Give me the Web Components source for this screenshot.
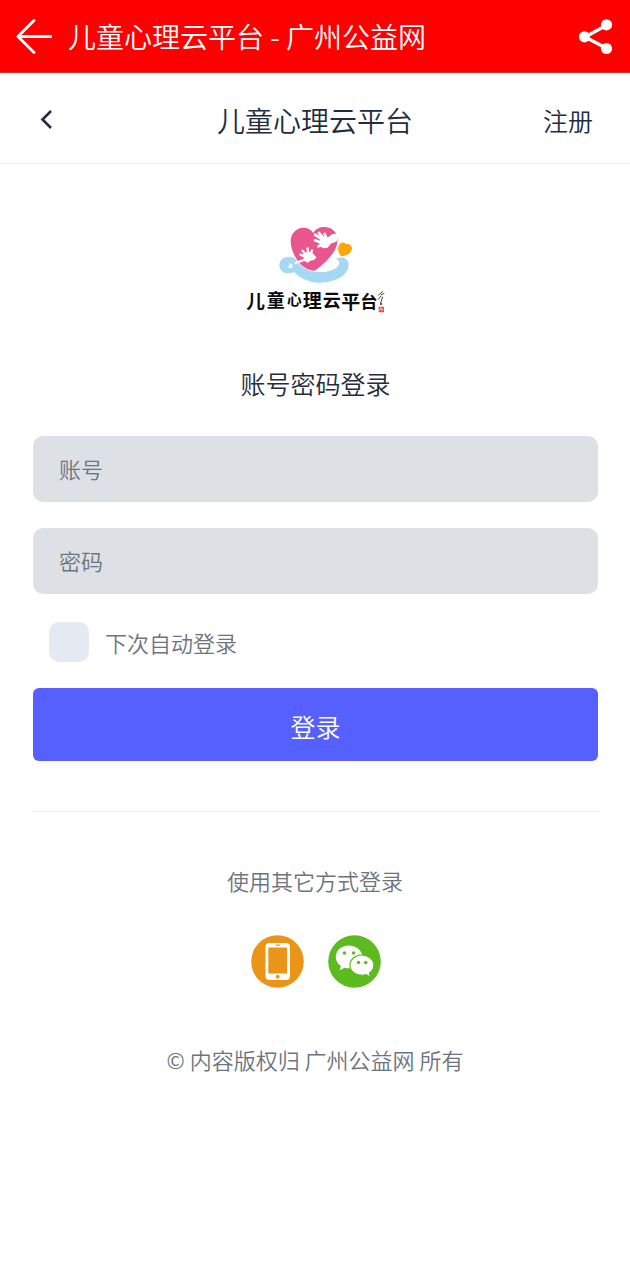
<!DOCTYPE html>
<html lang="zh-CN">
<head>
  <meta charset="UTF-8">
  <meta name="viewport" content="width=device-width, initial-scale=1">
  <title>儿童心理云平台 - 广州公益网</title>
  <style>
    body {
      background-color: #fff;
      color: #1f2d3d;
      font-family: "Noto Sans CJK SC", sans-serif;
      font-weight: 350;
      margin: 0;
    }
  </style>
</head>
<body>
  <app-bar>儿童心理云平台 - 广州公益网</app-bar>
  <page-nav>
    儿童心理云平台
    <a slot="action" href="#register">注册</a>
  </page-nav>
  <main>
    <site-logo></site-logo>
    <login-form></login-form>
    <social-login>使用其它方式登录</social-login>
  </main>
  <page-footer>© 内容版权归 广州公益网 所有</page-footer>

  <script>
    class AppBar extends HTMLElement {
      constructor () {
        super()
        this.shadow = this.attachShadow({ mode: 'open' })
      }

      connectedCallback () {
        this.render()
      }

      render () {
        this.shadow.innerHTML =
          `
          <style>
            :host {
              align-items: center;
              background-color: #fe0000;
              border-bottom: 1px solid #d93030;
              box-sizing: border-box;
              color: #fff;
              display: flex;
              gap: 16px;
              height: 73px;
              padding: 0 16px;
            }

            h1 {
              flex: 1;
              font-size: 28px;
              font-weight: inherit;
              line-height: 40px;
              margin: 0;
            }

            button {
              background: none;
              border: none;
              color: inherit;
              cursor: pointer;
              display: flex;
              padding: 0;
            }
          </style>

          <button type="button" aria-label="返回">
            <svg width="36" height="36" viewBox="0 0 36 36" fill="none" stroke="currentColor" stroke-width="2.8" stroke-linecap="round" stroke-linejoin="round">
              <path d="M35 18.500H2M18 2.500L2 18.500l16 16"/>
            </svg>
          </button>
          <h1><slot></slot></h1>
          <button type="button" aria-label="分享">
            <svg width="36" height="36" viewBox="0 0 36 36" fill="currentColor">
              <path d="M29 7L7 19l22 11.500" fill="none" stroke="currentColor" stroke-width="3.4"/>
              <circle cx="6.500" cy="18.800" r="5.600"/>
              <circle cx="28.500" cy="6.800" r="5.600"/>
              <circle cx="28.500" cy="30.500" r="5.600"/>
            </svg>
          </button>
        `
      }
    }

    class PageNav extends HTMLElement {
      constructor () {
        super()
        this.shadow = this.attachShadow({ mode: 'open' })
      }

      connectedCallback () {
        this.render()
      }

      render () {
        this.shadow.innerHTML =
          `
          <style>
            :host {
              align-items: center;
              border-bottom: 1px solid #ededed;
              box-sizing: border-box;
              display: grid;
              grid-template-columns: 1fr auto 1fr;
              height: 91px;
              padding: 3px 37px 0;
            }

            button {
              background: none;
              border: none;
              color: inherit;
              cursor: pointer;
              display: flex;
              justify-self: start;
              padding: 0;
            }

            h2 {
              font-size: 28px;
              font-weight: inherit;
              line-height: 40px;
              margin: 0;
            }

            ::slotted(a) {
              color: inherit;
              font-size: 25px;
              justify-self: end;
              line-height: 40px;
              text-decoration: none;
            }
          </style>

          <button type="button" aria-label="后退">
            <svg width="20" height="24" viewBox="0 0 20 24" fill="none" stroke="currentColor" stroke-width="2.6">
              <path d="M14 3L5.500 11.500l8.500 8.500"/>
            </svg>
          </button>
          <h2><slot></slot></h2>
          <slot name="action"></slot>
        `
      }
    }

    class SiteLogo extends HTMLElement {
      constructor () {
        super()
        this.shadow = this.attachShadow({ mode: 'open' })
      }

      connectedCallback () {
        this.render()
      }

      render () {
        this.shadow.innerHTML =
          `
          <style>
            :host {
              display: flex;
              justify-content: center;
              padding-top: 61px;
            }

            text {
              font-weight: 700;
            }
          </style>

          <svg width="140" height="90" viewBox="30 30 420 270" role="img" aria-label="儿童心理云平台">
            <!-- wave -->
            <path fill="#a4d8f5" d="M162 125C144 125 132 138 133 152C135 173 158 180 177 171C195 190 225 203 254 203C300 202 338 182 341 152C342 130 322 121 303 132C318 137 316 152 300 161C270 177 235 173 210 155C195 142 182 125 162 125ZM162 147C168 144 175 149 173 155C170 160 161 160 158 156C162 156 165 151 162 147Z"/>
            <!-- heart -->
            <path fill="#e8558f" stroke="#fff" stroke-width="5" paint-order="stroke" d="M235 54C222 34 190 32 173 56C160 78 170 112 188 137C201 155 218 165 238 167C254 157 271 143 287 123C309 98 316 63 294 45C276 31 246 34 235 54Z"/>
            <!-- small heart -->
            <path fill="#fba60a" d="M311 93C314 81 327 79 334 87C345 85 354 94 350 105C346 116 333 122 319 124C311 116 307 104 311 93Z"/>
            <!-- hands -->
            <g fill="#fff" stroke="#fff" stroke-linecap="round" stroke-linejoin="round">
              <path stroke-width="4" d="M256 76L264 68L278 70L291 60L309 57L303 78L286 84L277 96L266 98L256 92Z"/>
              <path stroke-width="4" d="M207 118L220 112L231 115L242 127L236 133L225 135L218 141L209 136Z"/>
              <path fill="none" stroke-width="8" d="M261 73L240 59M266 70L252 54M274 70L269 57M259 83L240 76M260 90L250 94"/>
              <path fill="none" stroke-width="7" d="M212 118L203 107M219 114L218 100M227 117L231 106M209 124L196 119M211 133L182 144"/>
            </g>
            <g fill="#0b0b0b">
              <text x="34" y="280" font-size="56">儿</text>
              <text x="95" y="275" font-size="54">童</text>
              <text x="156" y="271" font-size="44">心</text>
              <text x="203" y="279" font-size="57">理</text>
              <text x="263" y="277" font-size="54">云</text>
              <text x="319" y="282" font-size="57">平</text>
              <text x="376" y="279" font-size="52">台</text>
            </g>
            <!-- signature and seal -->
            <path fill="none" stroke="#222" stroke-width="2.500" d="M443 229L430 241M438 239L448 235M439 242L429 254M443 245L437 264"/>
            <circle cx="438" cy="267" r="3" fill="#222"/>
            <rect x="431" y="275" width="16" height="17" rx="2" fill="#d94a55"/>
            <path fill="none" stroke="#fff" stroke-width="1.500" d="M434 279h4v4h-4v5M441 278v11M438 284h7"/>
          </svg>
        `
      }
    }

    class TextField extends HTMLElement {
      constructor () {
        super()
        this.shadow = this.attachShadow({ mode: 'open' })
      }

      connectedCallback () {
        this.render()
      }

      render () {
        const label = this.getAttribute('label')
        const type = this.getAttribute('type') || 'text'

        this.shadow.innerHTML =
          `
          <style>
            :host {
              display: block;
            }

            input {
              background-color: #dde1e6;
              border: none;
              border-radius: 10px;
              box-sizing: border-box;
              color: #1f2d3d;
              display: block;
              font-family: inherit;
              font-size: 22px;
              font-weight: inherit;
              height: 66px;
              padding: 0 26px 2px;
              width: 100%;
            }

            input::placeholder {
              color: #6c757d;
              opacity: 1;
            }
          </style>

          <input type="${type}" placeholder="${label}" aria-label="${label}">
        `
      }
    }

    class LoginForm extends HTMLElement {
      constructor () {
        super()
        this.shadow = this.attachShadow({ mode: 'open' })
      }

      connectedCallback () {
        this.render()
      }

      render () {
        this.shadow.innerHTML =
          `
          <style>
            :host {
              display: block;
              padding: 48px 32px 0 33px;
            }

            h3 {
              font-size: 25px;
              font-weight: inherit;
              line-height: 40px;
              margin: 0 0 33px;
              text-align: center;
            }

            form {
              border-bottom: 1px solid #ededed;
              display: flex;
              flex-direction: column;
              gap: 26px;
              padding-bottom: 50px;
            }

            .remember {
              align-items: center;
              color: #6c757d;
              display: flex;
              font-size: 22px;
              gap: 16px;
              line-height: 32px;
              margin-top: 2px;
              padding-left: 16px;
            }

            .remember input {
              appearance: none;
              background-color: #e4e9f2;
              border-radius: 10px;
              height: 40px;
              margin: 0;
              width: 40px;
            }

            .remember input:checked {
              background-color: #5660ff;
            }

            form > button {
              background-color: #5660ff;
              border: none;
              border-radius: 6px;
              color: #fff;
              cursor: pointer;
              font-family: inherit;
              font-size: 25px;
              font-weight: inherit;
              height: 73px;
              padding: 2px 0 0;
            }
          </style>

          <h3>账号密码登录</h3>
          <form>
            <text-field label="账号"></text-field>
            <text-field label="密码" type="password"></text-field>
            <div class="remember">
              <input type="checkbox" id="remember">
              <label for="remember">下次自动登录</label>
            </div>
            <button type="submit">登录</button>
          </form>
        `

        this.shadow.querySelector('form').addEventListener('submit', event => {
          event.preventDefault()
        })
      }
    }

    class SocialLogin extends HTMLElement {
      constructor () {
        super()
        this.shadow = this.attachShadow({ mode: 'open' })
      }

      connectedCallback () {
        this.render()
      }

      render () {
        this.shadow.innerHTML =
          `
          <style>
            :host {
              color: #6c757d;
              display: block;
              padding-top: 52px;
            }

            p {
              font-size: 22px;
              line-height: 32px;
              margin: 0;
              text-align: center;
            }

            .links {
              display: flex;
              gap: 24px;
              justify-content: center;
              margin-top: 39px;
              padding-left: 2px;
            }

            a {
              display: flex;
            }
          </style>

          <p><slot></slot></p>
          <div class="links">
            <a href="#phone" aria-label="手机登录">
              <svg width="53" height="53" viewBox="0 0 53 53">
                <circle cx="26.500" cy="26.500" r="26.300" fill="#eb9518"/>
                <rect x="14.500" y="8" width="24.500" height="37" rx="4" fill="#fff"/>
                <rect x="17.300" y="12.500" width="18.800" height="26" fill="#eb9518"/>
                <rect x="24.500" y="9.500" width="4.500" height="1.300" rx=".6" fill="#eb9518"/>
                <circle cx="26.700" cy="41.700" r="1.900" fill="#eb9518"/>
              </svg>
            </a>
            <a href="#wechat" aria-label="微信登录">
              <svg width="53" height="53" viewBox="0 0 53 53">
                <circle cx="26.500" cy="26.500" r="26.300" fill="#5dbb1f"/>
                <path fill="#fff" d="M20.800 10.500C13.500 10.500 7.800 15.500 7.800 22c0 3.800 2 7 5.100 9.100l-1.300 4.100 5-2.500c7.500 2.200 17.700-1.500 17.700-10.700 0-6.500-6-11.500-13.500-11.500z"/>
                <path fill="#fff" stroke="#5dbb1f" stroke-width="1.200" d="M33.700 20c-6.700 0-11.800 4.700-11.800 10.200 0 5.800 5.400 10.200 11.800 10.200 1.600 0 3.100-.3 4.500-.7l4.400 2.600-1.200-4.200c2.800-2 4.500-4.700 4.500-7.900 0-5.500-5.400-10.200-12.200-10.200z"/>
                <g fill="#5dbb1f">
                  <circle cx="16.400" cy="18" r="1.800"/>
                  <circle cx="25.600" cy="18" r="1.800"/>
                  <circle cx="30.500" cy="27.500" r="1.700"/>
                  <circle cx="37.800" cy="27.500" r="1.700"/>
                </g>
              </svg>
            </a>
          </div>
        `
      }
    }

    class PageFooter extends HTMLElement {
      constructor () {
        super()
        this.shadow = this.attachShadow({ mode: 'open' })
      }

      connectedCallback () {
        this.render()
      }

      render () {
        this.shadow.innerHTML =
          `
          <style>
            :host {
              color: #6c757d;
              display: block;
              font-size: 22px;
              line-height: 32px;
              padding: 55px 32px;
              text-align: center;
            }
          </style>

          <footer><slot></slot></footer>
        `
      }
    }

    customElements.define('app-bar', AppBar)
    customElements.define('page-nav', PageNav)
    customElements.define('site-logo', SiteLogo)
    customElements.define('text-field', TextField)
    customElements.define('login-form', LoginForm)
    customElements.define('social-login', SocialLogin)
    customElements.define('page-footer', PageFooter)
  </script>
</body>
</html>
